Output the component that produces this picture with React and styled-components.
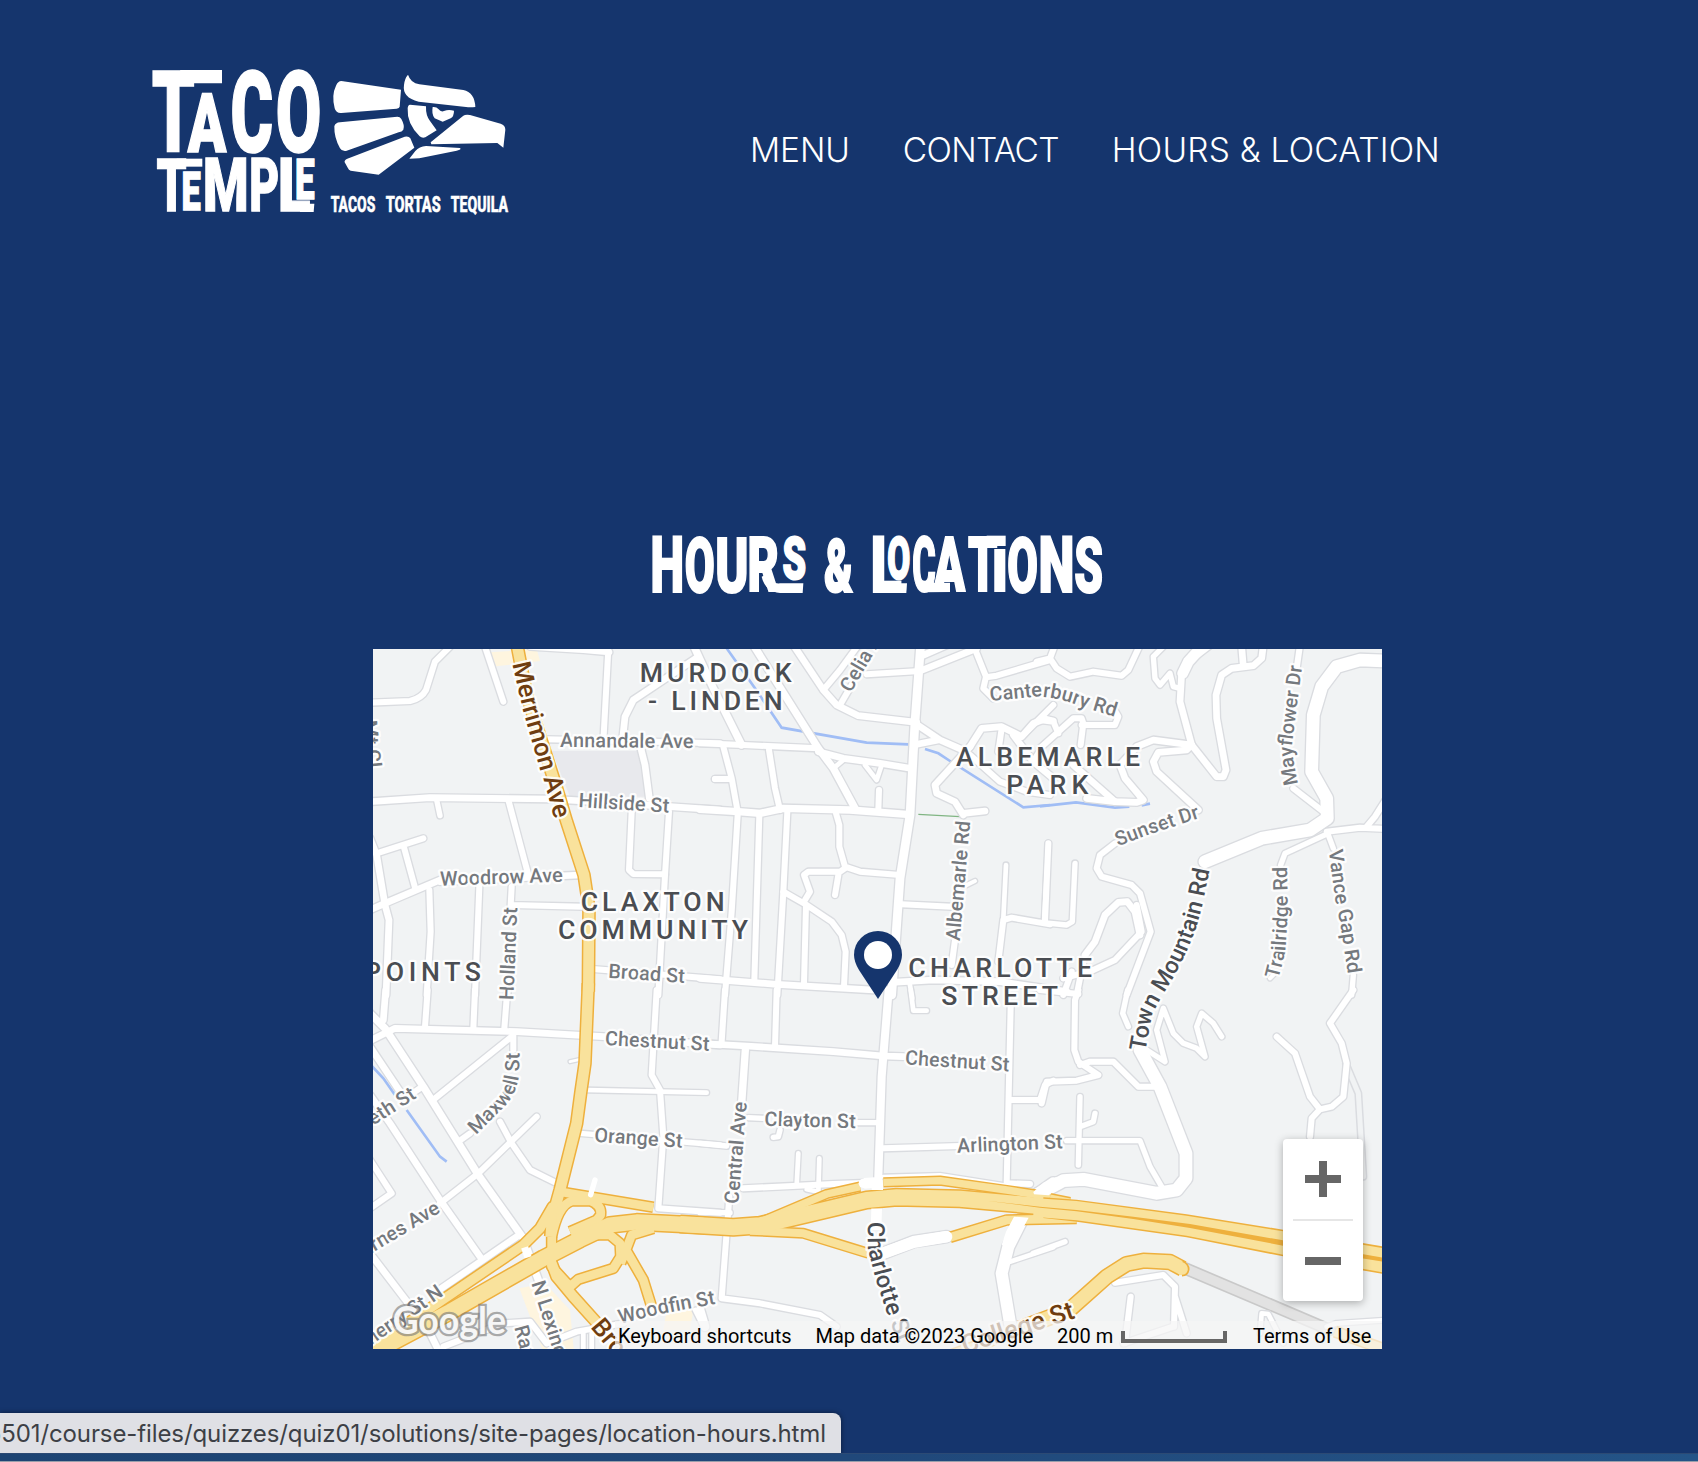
import React, { useId } from "react";
import styled, { createGlobalStyle } from "styled-components";

const navy = "#15356d";

const GlobalStyle = createGlobalStyle`
  * { box-sizing: border-box; }
  body { margin: 0; background: ${navy}; overflow: hidden; }
`;

const Page = styled.div`
  display: flex;
  flex-direction: column;
  width: 1698px;
  height: 1462px;
  overflow: hidden;
  background: ${navy};
  color: #fff;
  font-family: Inter, "Liberation Sans", sans-serif;
`;

const Header = styled.header`
  display: flex;
  align-items: flex-start;
  height: 520px;
  padding: 55px 0 0 140px;
`;

const LogoArt = styled.svg`
  display: block;
  flex: none;
  width: 380px;
  height: 175px;
  fill: #fff;
`;

const Nav = styled.nav`
  display: flex;
  gap: 53px;
  margin: 75px 0 0 230px;
`;

const NavLink = styled.a`
  color: #fff;
  font-size: 33.5px;
  font-weight: 330;
  line-height: 41px;
  letter-spacing: ${(p) => p.$track}px;
  white-space: nowrap;
`;

const Main = styled.main`
  display: flex;
  flex-direction: column;
  align-items: center;
  width: 1009px;
  margin-left: 373px;
  flex: 1;
`;

const Title = styled.h1`
  display: flex;
  margin: 0 0 39px 5px;
  font-size: 0;
`;

const TitleArt = styled.svg`
  display: block;
  width: 480px;
  height: 90px;
  fill: #fff;
`;

const MapFrame = styled.section`
  position: relative;
  flex: none;
  width: 1009px;
  height: 700px;
  overflow: hidden;
  background: #f1f3f4;
  font-family: Roboto, "Liberation Sans", sans-serif;
`;

const MapCanvas = styled.svg`
  display: block;
  width: 1009px;
  height: 700px;
  font-family: Roboto, "Liberation Sans", sans-serif;
`;

const Attribution = styled.div`
  position: absolute;
  right: 0;
  bottom: 0;
  display: flex;
  height: 28px;
  color: #000;
  font-size: 20px;
  line-height: 31px;
  white-space: nowrap;
`;

const Credit = styled.div`
  display: flex;
  width: ${(p) => p.$width}px;
  padding-left: ${(p) => p.$inset}px;
  background: rgba(245, 245, 245, 0.72);
`;

const ScaleBar = styled.span`
  width: 106px;
  height: 12px;
  margin: 10px 0 0 8px;
  border: 4px solid #666;
  border-top: 0;
`;

const ZoomControl = styled.div`
  position: absolute;
  right: 19px;
  bottom: 48px;
  display: flex;
  flex-direction: column;
  align-items: center;
  width: 80px;
  height: 162px;
  border-radius: 4px;
  background: #fff;
  box-shadow: 0 2px 8px rgba(0, 0, 0, 0.3);
`;

const ZoomButton = styled.button`
  display: flex;
  align-items: center;
  justify-content: center;
  width: 80px;
  height: 80px;
  padding: 0;
  border: 0;
  background: none;
`;

const ZoomRule = styled.hr`
  width: 60px;
  height: 2px;
  margin: 0;
  border: 0;
  background: #e6e6e6;
`;

const Footer = styled.footer`
  display: flex;
  flex-direction: column;
  flex: none;
`;

const StatusBubble = styled.div`
  display: flex;
  justify-content: flex-end;
  width: 841px;
  height: 41px;
  padding-right: 15px;
  overflow: hidden;
  border-top-right-radius: 8px;
  background: #dfe0e5;
  box-shadow: 0 0 5px rgba(0, 0, 0, 0.5);
  color: #3d4046;
  font-size: 24px;
  line-height: 41px;
  letter-spacing: -0.1px;
  white-space: nowrap;
`;

const WindowEdge = styled.div`
  height: 9px;
  margin-top: -1px;
  border-top: 1px solid #2c4a74;
  border-bottom: 1px solid #9a9fab;
  background: linear-gradient(90deg, #1d4473, #20487a 50%, #245487);
`;

/* ---------- Lettering ---------- */

const pen = document.createElement("canvas").getContext("2d");
pen.font = '900 200px Roboto, "Liberation Sans", sans-serif';

function fit([ch, left, top, right, bottom], weight) {
  const m = pen.measureText(ch);
  const inkW = m.actualBoundingBoxLeft + m.actualBoundingBoxRight;
  const inkH = m.actualBoundingBoxAscent + m.actualBoundingBoxDescent;
  const sx = (right - left - weight) / inkW;
  const sy = (bottom - top - weight) / inkH;
  return {
    ch,
    x: left + weight / 2 + m.actualBoundingBoxLeft * sx,
    y: bottom - weight / 2 - m.actualBoundingBoxDescent * sy,
    size: 200 * sy,
    length: m.width * sx,
  };
}

function Lettering({ glyphs, weight }) {
  return (
    <text fontFamily='Roboto, "Liberation Sans", sans-serif' fontWeight="900" stroke="#fff" strokeWidth={weight}>
      {glyphs.map((g, i) => {
        const f = fit(g, weight);
        return (
          <tspan key={i} x={f.x} y={f.y} fontSize={f.size} textLength={f.length} lengthAdjust="spacingAndGlyphs">
            {f.ch}
          </tspan>
        );
      })}
    </text>
  );
}

const taco = [["T", 36, 45, 164, 293], ["A", 140, 112, 262, 293], ["C", 275, 42, 398, 296], ["O", 411, 42, 541, 296]];
const temple = [
  ["T", 50, 311, 140, 471], ["E", 128, 348, 183, 468], ["M", 195, 310, 320, 471],
  ["P", 333, 308, 415, 471], ["L", 420, 308, 510, 471], ["E", 468, 310, 524, 434],
];
const titleGlyphs = [
  ["H", 36, 47, 128, 219], ["O", 135, 45, 223, 220], ["U", 230, 47, 321, 220], ["R", 327, 44, 417, 216],
  ["S", 428, 48, 498, 183], ["&", 552, 50, 640, 220], ["L", 697, 45, 785, 219], ["O", 742, 45, 811, 183],
  ["C", 817, 45, 888, 217], ["A", 877, 46, 979, 216], ["T", 983, 47, 1073, 216], ["I", 1063, 87, 1097, 215],
  ["O", 1103, 45, 1193, 220], ["N", 1200, 47, 1298, 218], ["S", 1304, 45, 1388, 220],
];

function Logo() {
  return (
    <LogoArt viewBox="0 0 1140 525">
      <Lettering glyphs={taco} weight={5} />
      <path d="M120 45H246V85H136Z" />
      <Lettering glyphs={temple} weight={4} />
      <path d="M110 311H187V335H110Z" />
      <path d="M480 446H523L521 471H480Z" />
      <path d="M604 78 L783 104 L779 155 Q778 160 770 161 L604 174 Q588 175 584 160 Q574 120 588 92 Q594 78 604 78Z" />
      <path d="M600 202 L772 185 Q780 185 784 192 Q795 212 790 224 Q786 230 776 232 L618 288 Q606 290 600 280 Q582 248 583 214 Q586 203 600 202Z" />
      <path d="M794 245 Q806 242 811 250 L823 278 L716 359 L632 347 Q626 346 624 340 L614 322 Q612 316 622 311Z" />
      <path d="M804 59 Q812 84 838 88 L970 105 Q1004 112 1006 156 Q990 158 978 156 L836 140 Q786 128 792 90 Q794 70 804 59Z" />
      <path d="M810 149 L858 154 Q857 182 870 198 L890 226 L856 247 Q846 250 839 244 Q800 206 803 160 Q804 149 810 149Z" />
      <path d="M878 156 Q890 155 895 162 Q903 172 912 168 Q925 163 942 167 Q942 184 932 190 L908 200 L884 190 Q874 178 878 156Z" />
      <path d="M872 262 L970 182 Q976 178 990 180 L1082 206 Q1096 210 1096 224 L1090 278 L1072 264 L874 268Z" />
      <path d="M808 311 L826 288 Q838 274 858 273 L960 279 Q966 284 950 287 L838 310Z" />
      <g fontFamily='Roboto, "Liberation Sans", sans-serif' fontWeight="800" fontSize="66" stroke="#fff" strokeWidth="1.5">
        <text x="572" y="472" textLength="134" lengthAdjust="spacingAndGlyphs">TACOS</text>
        <text x="737" y="472" textLength="165" lengthAdjust="spacingAndGlyphs">TORTAS</text>
        <text x="932" y="472" textLength="172" lengthAdjust="spacingAndGlyphs">TEQUILA</text>
      </g>
    </LogoArt>
  );
}

/* ---------- Map ---------- */

/* The map is split into six sheets; each sheet has its own origin. */
const sheets = [
  {
    at: [-9, -12],
    land: [["#e8e9ed", "M545 318 L812 318 L838 455 L600 455Z"], ["#fef5df", "M360 22 L500 12 L510 48 L378 64Z"]],
    water: [],
    roads: [
      [18, "M0 173 L120 168 Q155 160 168 135 L195 50 L240 5"],
      [18, "M345 5 L400 170"],
      [18, "M480 5 L640 15 L718 22 M715 12 L700 290"],
      [18, "M530 283 L1050 295"],
      [20, "M985 35 L790 165 L765 215 L757 290 M810 300 L825 360 L838 460"],
      [18, "M1035 402 L1080 402"],
      [20, "M0 470 L180 458 L540 462 L640 468 L900 485 L1050 495"],
      [16, "M200 465 L210 512"],
      [18, "M415 465 L475 690"],
      [18, "M20 625 L160 580 M100 600 L137 735"],
      [20, "M0 580 L20 630 L45 780 L57 825 L48 1050"],
      [20, "M0 795 L45 775 L210 705 M210 710 L630 690"],
      [18, "M178 735 L182 860 L170 1050"],
      [18, "M328 725 L315 1050"],
      [18, "M425 725 L422 780 L640 785"],
      [18, "M785 500 L777 675 L790 687 L885 688"],
      [18, "M897 500 L885 690 L865 1050"],
      [18, "M668 972 L1050 1003"],
      [18, "M415 1000 L412 1050"],
    ],
    highways: [[32, "M441 0 L470 150 L560 430 L590 530 L642 690 L657 790 L655 1040"]],
  },
  {
    at: [981, -12],
    land: [],
    water: ["M80 10 L165 130 L245 248 L500 293 L625 298", "M675 312 L715 325 L750 348 L970 487 L1050 480"],
    roads: [
      [22, "M160 0 L355 310 L400 370 L465 490"],
      [20, "M280 0 L370 135 L410 180 L475 212 L650 232"],
      [18, "M370 135 L420 75 L475 0 M420 180 L455 120"],
      [18, "M500 88 L660 78"],
      [22, "M-20 0 L40 130 L125 300"],
      [18, "M0 295 L130 300 L355 310"],
      [26, "M662 0 L645 230 L630 510 L600 700 L575 1050"],
      [20, "M660 78 L830 10 M660 35 L740 0"],
      [20, "M645 235 L720 285 L800 320 M640 300 L715 285"],
      [20, "M355 320 L430 340 L540 355 L630 370"],
      [14, "M400 370 L430 345 M495 360 L530 405 L545 360"],
      [18, "M535 495 L537 435"],
      [18, "M820 0 L858 95 L850 130 L880 160 M858 97 L890 92 L1050 45"],
      [22, "M0 493 L115 500 L180 505 L250 490 L450 495 L620 508"],
      [18, "M70 305 L95 400 L113 500 M45 402 L90 402"],
      [18, "M207 315 L225 430 L240 495"],
      [18, "M113 510 L95 800 L75 1050"],
      [18, "M178 510 L163 1005"],
      [18, "M262 500 L250 740 L232 1050"],
      [18, "M250 740 L320 780 L395 830 L425 870 L437 920 L432 1025"],
      [18, "M408 505 L418 540 L418 605 L435 665 L480 680 L600 690"],
      [18, "M435 670 L420 680 L325 680 L312 690 L330 740 L315 765 M415 690 L405 750"],
      [18, "M318 780 L312 1015"],
      [18, "M605 778 L755 785"],
      [20, "M810 305 L705 420 L710 445 L765 470 L790 510 M790 505 L855 498"],
      [18, "M765 885 L755 960"],
      [20, "M810 305 L845 250 L905 245 L965 275 L1000 235 L1035 222 L1060 228"],
      [18, "M905 250 L895 320 M810 330 L900 410 L980 440 L1050 450 M965 275 L1060 180"],
      [12, "M825 708 L790 725"],
      [14, "M918 660 L910 820"],
      [18, "M910 825 L895 950 M910 825 L935 818 L1050 838 M1045 595 L1035 830"],
      [20, "M0 1000 L230 1018 L520 1035 M575 1012 L700 1005 L900 1010 L1100 1040"],
      [14, "M628 1010 L637 1060"],
    ],
    highways: [],
  },
  {
    at: [2001, -12],
    land: [],
    water: ["M0 484 L108 472 L225 488 L268 485 M305 481 L330 476"],
    roads: [
      [18, "M-10 50 L30 40 L50 70 L90 95 L160 80 L245 92 L265 75 L300 0 M30 40 L45 0"],
      [16, "M370 5 L340 35 L345 100 L360 120 L390 85 L400 125 L420 130"],
      [32, "M490 0 L445 50 L428 85"],
      [20, "M510 0 L445 50 L425 85 L420 170 L455 300"],
      [20, "M455 300 L530 395 L550 395 L558 375 L530 220 L528 150 L545 90 L575 70 L640 62 L665 40 L670 0 M605 5 L610 65"],
      [20, "M455 300 L340 285 L290 305 L240 360 L255 400 L310 465 L290 472 L225 470 L100 360"],
      [20, "M455 300 L440 315 L355 322 L340 350 L350 380 L475 495"],
      [18, "M220 190 L235 215 L225 240 L125 240"],
      [18, "M0 225 L40 230 L55 265 M0 310 L100 220 L125 220 L130 235 L122 300"],
      [20, "M-80 270 L-20 350 L40 400 M-20 350 L0 320 M140 460 L225 470"],
      [18, "M780 0 L770 70 M760 430 L850 500"],
      [18, "M860 560 L960 548 L1040 552 M980 545 L1005 515 L1040 460"],
      [16, "M865 565 L735 625 L722 660 M865 570 L880 610 M940 990 L935 1050"],
      [18, "M225 595 L180 630 L170 670 L185 695 L275 720 L300 745 L332 860 L260 1050"],
      [20, "M300 870 L285 800 L262 770 L235 772 L195 810 L165 890 L135 930"],
      [18, "M290 780 L305 860 L225 945 L160 975 L70 1000"],
      [14, "M25 595 L12 835"],
      [16, "M105 655 L97 830 L80 840 L0 832"],
      [18, "M95 980 L70 1050 M130 950 L110 1050"],
      [12, "M690 1000 L700 990"],
      [38, "M1040 48 L960 45 L890 65 L845 125 L820 210 L815 380 L860 460 L862 520 L810 555 L665 580 L495 650"],
    ],
    highways: [],
  },
  {
    at: [-9, 1023],
    land: [
      ["#b4dcc0", "M150 985 L318 836 L332 848 L180 985Z"],
      ["#fef5df", "M448 895 L525 880 L600 960 L612 1086 L520 1086Z M890 960 L970 960 L960 1020 L880 1020Z"],
    ],
    water: ["M0 222 L40 265 L75 315 M110 360 L210 500 L230 515"],
    roads: [
      [20, "M0 152 L75 115 L440 125 L700 140 L1050 165"],
      [20, "M47 0 L40 90"],
      [18, "M173 0 L165 110 M315 0 L310 115 M412 0 L403 115"],
      [22, "M0 70 L45 115 L160 290 L325 555 L460 745"],
      [20, "M0 170 L90 305"],
      [20, "M0 315 L60 400 L210 630 L330 800"],
      [18, "M425 140 L195 325 M430 135 L430 180"],
      [18, "M150 295 L120 315 M265 455 L300 430"],
      [18, "M390 395 L425 460 L480 540 L555 577"],
      [18, "M500 380 L325 550 L210 640"],
      [18, "M0 510 L65 610 L0 655"],
      [20, "M0 790 L130 960"],
      [20, "M440 740 L215 895 M180 1030 L210 1090"],
      [18, "M860 0 L845 255 L870 300 L880 440 L865 655 L1050 668"],
      [14, "M650 300 L1010 308"],
      [16, "M630 430 L1050 465"],
      [8, "M600 215 L630 208"],
      [18, "M220 1070 L400 1000 L480 995 L530 1060 L620 1025 L760 1000"],
      [14, "M640 1030 L640 1090 M665 1030 L665 1090 M975 960 L1000 1010"],
      [22, "M465 760 L505 870"],
    ],
    highways: [
      [26, "M570 605 L850 652"],
      [26, "M545 740 Q565 645 605 633 L660 632 Q696 645 692 675 L680 690 L600 725"],
      [26, "M545 740 L545 830 L600 890 L625 868 L730 835 L752 800 L750 760 L720 735 L640 735"],
      [26, "M850 715 L785 735 L768 780 L820 870 L845 950 M768 780 L752 820"],
      [30, "M545 820 L560 860 L610 920 L700 1020"],
      [32, "M655 -20 L650 100 L645 220 L632 310 L620 400 L570 600 L545 690"],
      [28, "M-10 1080 L180 955 L460 765 L510 715 L548 650 L540 740"],
      [46, "M-10 1098 L240 965 L380 885 L520 805 L630 748 L720 705 L800 696 L1000 706"],
    ],
  },
  {
    at: [981, 1023],
    land: [],
    water: [],
    roads: [
      [18, "M75 0 L65 155 M230 0 L225 170"],
      [20, "M30 162 L140 168 L400 185 L550 198 L610 200"],
      [14, "M632 0 L640 62 L680 62"],
      [22, "M136 180 L125 340"],
      [18, "M88 620 L65 925 L180 940 L360 975 L410 1010"],
      [16, "M145 383 L190 385 M470 398 L540 398 M240 420 L235 440 L220 442"],
      [16, "M0 460 L80 468 M0 668 L90 668"],
      [18, "M130 595 L400 582 L520 578"],
      [14, "M295 490 L290 585 M358 505 L355 605 L320 598"],
      [18, "M550 475 L780 468"],
      [18, "M932 50 L920 580 L990 582 M930 330 L1020 330 L1035 285 L1060 272"],
      [12, "M550 560 L720 555 L910 585"],
      [14, "M1060 772 L930 815"],
      [24, "M566 0 L545 260 L535 560"],
      [34, "M550 790 L640 755 L740 740"],
      [36, "M965 690 L925 770 L905 850 L930 1000 M1060 580 L1010 615"],
      [26, "M0 960 L15 1010"],
    ],
    highways: [
      [22, "M160 705 L380 612 L480 590"],
      [22, "M550 577 L720 572 L920 600 L1050 620"],
      [24, "M150 722 L310 730 L505 790"],
      [26, "M750 742 L920 690 L1130 685"],
      [28, "M740 1100 L1060 985"],
      [48, "M-60 702 L100 712 L180 706 L500 630 L590 622 L780 626 L1060 652"],
    ],
  },
  {
    at: [2001, 1023],
    land: [],
    water: [],
    roads: [
      [16, "M263 0 L248 70 L265 110 M320 180 L375 215 L350 120 L370 55 L400 130 L430 160 L470 175 L495 200 L470 110 L485 70 L520 100 L545 140"],
      [18, "M115 0 L105 30 L103 180 L115 215 L175 255 L110 272 L20 275 L5 340 M120 225 L150 215 L220 215 L295 290 L345 290"],
      [18, "M0 0 L115 12"],
      [16, "M120 320 L115 525 M165 370 L160 395 L120 410 M80 452 L300 452 L330 530 L365 590"],
      [16, "M75 755 L-20 790"],
      [18, "M225 878 L370 855 L405 890 L402 1010 M272 920 L255 1060 M405 920 L440 1030 M250 1060 L400 1010"],
      [18, "M710 140 L765 190 L810 320 L840 358 L875 350 L910 320 L920 220 L905 160 L870 100 L940 0 M840 358 L815 385 L810 440"],
      [14, "M660 1030 L665 970 L685 972 L730 1060 M860 1010 L890 1000 L1040 990"],
      [38, "M300 180 L360 290 L438 490 L438 565 L410 600 L350 610 L130 568 L70 572 L-10 615"],
    ],
    highways: [
      [28, "M885 1025 L1040 1080"],
      [40, "M-60 1015 L90 958 L200 860 L260 822 L310 812 L390 816 L428 836"],
      [18, "M30 622 L90 634"],
      [20, "M-10 680 L105 686"],
    ],
  },
];

const dark = "#4a4d52";
const grey = "#75797e";
const brown = "#6f3d10";

/* [sheet, text, baseline path, colour, size] */
const streets = [
  [0, "Merrimon Ave", "M427 56 L460 200 L513 385 L523 412 L575 600", brown, 77],
  [0, "Annandale Ave", "M570 306 L1050 310", grey, 60],
  [0, "Hillside St", "M625 486 L1000 510", grey, 60],
  [0, "Woodrow Ave", "M211 722 L650 708", grey, 60],
  [0, "Holland St", "M430 1066 L446 700", grey, 60],
  [0, "Broad St", "M714 998 L1000 1018", grey, 60],
  [0, "Mt Cl", "M-22 228 L-2 420", grey, 60],
  [1, "Celia Ave", "M452 145 L580 -75", grey, 60],
  [1, "Albemarle Rd", "M779 889 L815 480", grey, 60],
  [2, "Canterbury Rd", "M-149 168 L-64 160 L-4 154 Q66 160 126 185 L286 235", grey, 60],
  [2, "Sunset Dr", "M234 604 L320 571 L540 499", grey, 60],
  [2, "Mayflower Dr", "M774 417 L759 340 L757 290 L770 190 L792 20", grey, 60],
  [2, "Vance Gap Rd", "M866 616 L885 760 L903 850 L932 1040", grey, 60],
  [2, "Trailridge Rd", "M715 1003 L736 920 L744 800 L739 600", grey, 60],
  [2, "Town Mountain Rd", "M316 1220 L336 1110 L370 1045 Q453 920 485 790 L520 620", dark, 70],
  [3, "Chestnut St", "M704 165 L1100 187", grey, 60],
  [3, "Orange St", "M672 455 L1030 480", grey, 60],
  [3, "Maxwell St", "M318 435 L398 355 Q445 310 448 240 L449 100", grey, 60],
  [3, "eth St", "M9 407 L200 285", grey, 60],
  [3, "arnes Ave", "M-14 801 L300 614", grey, 60],
  [3, "herry St N", "M3 1066 L300 862", grey, 60],
  [3, "N Lexington Ave", "M484 880 L510 960 L618 1300", grey, 60],
  [3, "Rankin Ave", "M433 1012 L497 1250", grey, 60],
  [3, "Woodfin St", "M750 1002 L870 972 L1100 930", grey, 60],
  [3, "Broadway", "M660 1012 L860 1250", brown, 77],
  [4, "Central Ave", "M115 643 L145 280", grey, 60],
  [4, "Clayton St", "M193 407 L550 417", grey, 60],
  [4, "Chestnut St", "M614 223 L1000 249", grey, 60],
  [4, "Arlington St", "M772 488 L1200 470", grey, 60],
  [4, "Charlotte St", "M503 696 L504 780 L528 870 L566 985 L650 1200", dark, 71],
  [4, "College St", "M794 1091 L1040 1012 L1200 960", brown, 77],
];

/* [sheet, text, x, baseline, length] */
const districts = [
  [0, "MURDOCK", 809, 112, 456], [0, "- LINDEN", 834, 195, 404], [0, "CLAXTON", 632, 798, 432],
  [0, "COMMUNITY", 564, 883, 570], [0, "POINTS", -18, 1008, 351], [1, "ALBEMARLE", 768, 364, 552],
  [1, "PARK", 919, 448, 246], [1, "CHARLOTTE", 625, 996, 551], [1, "STREET", 724, 1080, 350],
];

const shift = (n) => `translate(${sheets[n].at[0]} ${sheets[n].at[1]})`;

function Roads({ kind, color, extra }) {
  return (
    <g fill="none" stroke={color} strokeLinecap={kind === "highways" ? "butt" : "round"} strokeLinejoin="round">
      {sheets.map((s, n) => (
        <g key={n} transform={shift(n)}>
          {s[kind].map(([w, d], i) => (
            <path key={i} d={d} strokeWidth={w + extra} />
          ))}
        </g>
      ))}
    </g>
  );
}

function StreetLabel({ label }) {
  const id = useId();
  const [sheet, text, d, color, size] = label;
  return (
    <g transform={shift(sheet)}>
      <path id={id} d={d} fill="none" stroke="none" />
      <text fill={color} fontSize={size} fontWeight="500">
        <textPath href={`#${id}`}>{text}</textPath>
      </text>
    </g>
  );
}

function CityMap() {
  return (
    <MapCanvas viewBox="0 0 3027 2100">
      {sheets.map((s, n) => (
        <g key={n} transform={shift(n)}>
          {s.land.map(([c, d], i) => <path key={i} d={d} fill={c} />)}
        </g>
      ))}
      {sheets.map((s, n) => (
        <g key={n} transform={shift(n)} fill="none" stroke="#a0bdf5" strokeWidth="8">
          {s.water.map((d, i) => <path key={i} d={d} />)}
        </g>
      ))}
      <path d="M1636 496 L1761 503" stroke="#80b583" strokeWidth="4" />
      <g transform={shift(5)} fill="none" strokeLinejoin="round" strokeLinecap="round">
        <path d="M918 222 L955 310 L970 560" stroke="#dadce0" strokeWidth="24" />
        <path d="M918 222 L955 310 L970 560" stroke="#f1f3f4" strokeWidth="15" />
        <path d="M435 835 L870 1020" stroke="#c9c9c9" strokeWidth="38" />
        <path d="M435 835 L870 1020" stroke="#e2e2e2" strokeWidth="28" />
      </g>
      <Roads kind="roads" color="#dadce0" extra={8} />
      <Roads kind="roads" color="#ffffff" extra={0} />
      <Roads kind="highways" color="#eeb03d" extra={9} />
      <Roads kind="highways" color="#f9e29c" extra={0} />
      <g transform={shift(5)}>
        <path d="M10 622 L110 629 L440 673 L729 719 L1040 771 L1040 854 L729 799 L440 742 L110 695 L10 684Z" fill="#eeb03d" />
        <path d="M-20 624 L110 633 L440 677 L729 724 L1040 776 L1040 849 L729 794 L440 737 L110 691 L-20 680Z" fill="#f9e29c" />
        <path d="M-160 632 L0 650 L110 660 L280 680 L450 702 L729 751 L1040 805 L1040 817 L729 767 L450 714 L280 687 L110 664 L0 653Z" fill="#eeb03d" />
        <circle cx="428" cy="836" r="20" fill="#f9e29c" />
        <path d="M428 814 Q446 822 446 838 Q444 856 426 857" fill="none" stroke="#eeb03d" strokeWidth="5" />
      </g>
      <g fill="none" stroke="#fff">
        <path transform={shift(4)} d="M492 580 L548 576" strokeWidth="32" strokeLinecap="butt" />
        <path transform={shift(4)} d="M490 580 L500 580" strokeWidth="28" strokeLinecap="round" />
        <path transform={shift(4)} d="M532 580 L532 600" strokeWidth="34" />
        <path transform={shift(4)} d="M530 656 L528 720" strokeWidth="32" />
        <path transform={shift(4)} d="M548 790 L640 757 L740 740" strokeWidth="34" strokeLinecap="round" />
        <path transform={shift(4)} d="M942 680 L986 683 L952 745 L940 775 L905 765 L918 725Z" fill="#fff" stroke="none" />
        <path transform={shift(4)} d="M1000 606 L1030 578 L1070 560 L1070 598 L1046 616 L1002 613Z" fill="#fff" stroke="none" />
        <path transform={shift(3)} d="M662 614 L675 570" strokeWidth="16" strokeLinecap="round" />
        <path transform={shift(3)} d="M464 772 L474 802" strokeWidth="22" />
      </g>
      <g stroke="#fff" strokeOpacity="0.9" strokeWidth="14" strokeLinejoin="round" paintOrder="stroke">
        {streets.map((l, i) => <StreetLabel key={i} label={l} />)}
        {districts.map(([s, t, x, y, len]) => (
          <text key={t} transform={shift(s)} x={x} y={y} textLength={len} fill={dark} fontSize="80" fontWeight="500">
            {t}
          </text>
        ))}
      </g>
      <g transform={shift(1)}>
        <path d="M534 1062 L477 975 Q462 950 462 929 A72 71 0 0 1 606 929 Q606 950 591 975Z" fill={navy} />
        <circle cx="534" cy="930" r="42" fill="#fff" />
      </g>
      <text x="59" y="2054" textLength="340" lengthAdjust="spacingAndGlyphs" fontFamily="Lato, sans-serif" fontSize="116"
        fontWeight="700" fill="#fff" fillOpacity="0.92" stroke="#777" strokeOpacity="0.6" strokeWidth="14" paintOrder="stroke">
        Google
      </text>
    </MapCanvas>
  );
}

export default function App() {
  return (
    <Page>
      <GlobalStyle />
      <Header>
        <Logo />
        <Nav>
          <NavLink $track={-0.1}>MENU</NavLink>
          <NavLink $track={-0.7}>CONTACT</NavLink>
          <NavLink $track={0.2}>HOURS &amp; LOCATION</NavLink>
        </Nav>
      </Header>
      <Main>
        <Title>
          <TitleArt viewBox="0 0 1440 270">
            <Lettering glyphs={titleGlyphs} weight={6} />
            <path d="M375 165 Q385 192 420 190 L490 190 L488 219 L420 219 Q375 215 365 170Z" />
            <path d="M760 190 L801 190 L799 219 L760 219Z" />
            <path d="M855 189 L930 188 L930 216 L855 217Z" />
            <path d="M1040 47 H1097 V78 H1040Z" />
          </TitleArt>
        </Title>
        <MapFrame>
          <CityMap />
          <ZoomControl>
            <ZoomButton aria-label="Zoom in">
              <svg width="36" height="36" fill="#666"><path d="M14 0h8v14h14v8H22v14h-8V22H0v-8h14z" /></svg>
            </ZoomButton>
            <ZoomRule />
            <ZoomButton aria-label="Zoom out">
              <svg width="36" height="36" fill="#666"><path d="M0 14h36v8H0z" /></svg>
            </ZoomButton>
          </ZoomControl>
          <Attribution>
            <Credit $width={188} $inset={3}>Keyboard shortcuts</Credit>
            <Credit $width={242} $inset={12.5}>Map data ©2023 Google</Credit>
            <Credit $width={196} $inset={12}>200 m<ScaleBar /></Credit>
            <Credit $width={141} $inset={12}>Terms of Use</Credit>
          </Attribution>
        </MapFrame>
      </Main>
      <Footer>
        <StatusBubble>5501/course-files/quizzes/quiz01/solutions/site-pages/location-hours.html</StatusBubble>
        <WindowEdge />
      </Footer>
    </Page>
  );
}
